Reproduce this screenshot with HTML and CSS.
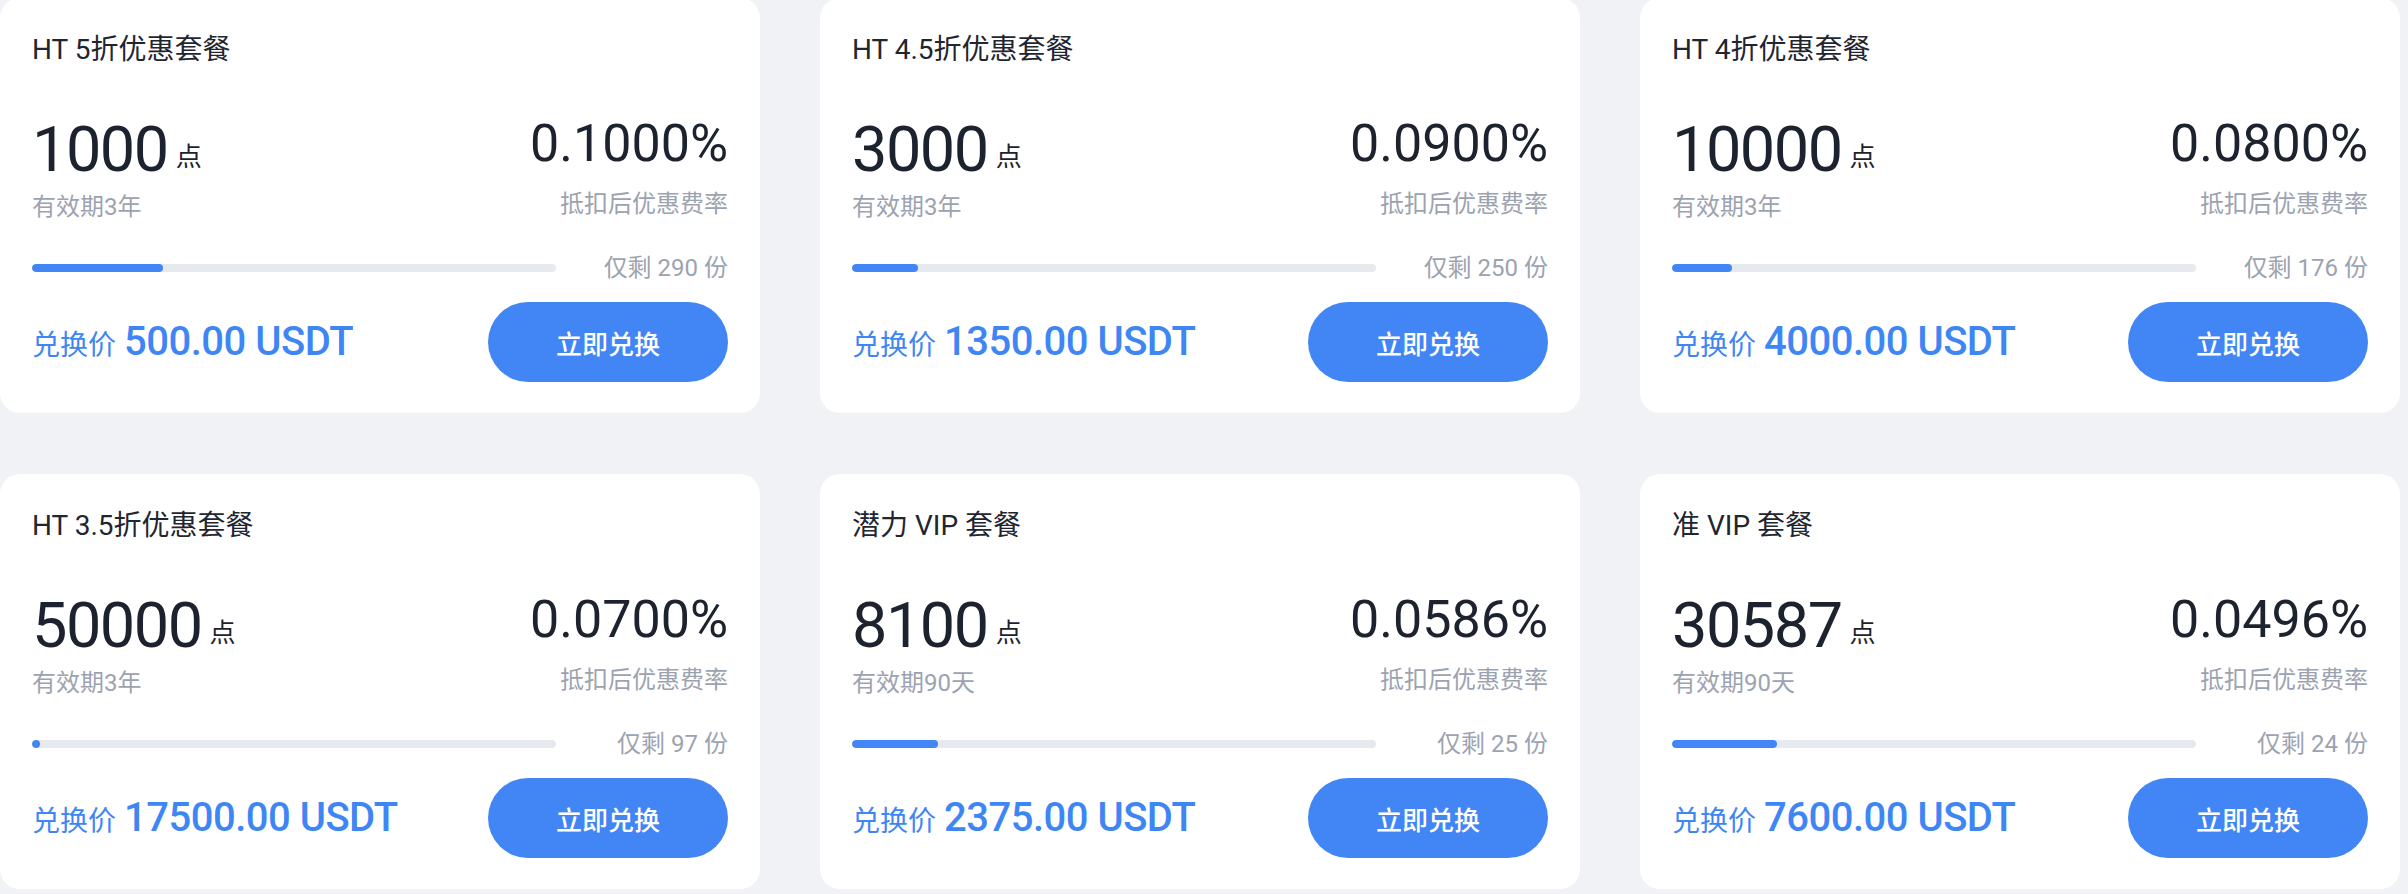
FILE: index.html
```html
<!DOCTYPE html>
<html lang="zh-CN">
<head>
<meta charset="utf-8">
<title>套餐兑换</title>
<link rel="stylesheet" href="styles.css">
</head>
<body>
<main class="grid">
  <section class="card">
    <div class="title">HT 5折优惠套餐</div>
    <div class="stats">
      <div class="col">
        <div class="amount"><span class="num">1000</span><span class="unit">点</span></div>
        <div class="label">有效期3年</div>
      </div>
      <div class="col right">
        <div class="rate">0.1000%</div>
        <div class="label label-r">抵扣后优惠费率</div>
      </div>
    </div>
    <div class="progress">
      <div class="track"><div class="fill" style="width:25%"></div></div>
      <span class="left">仅剩 290 份</span>
    </div>
    <div class="foot">
      <div class="price"><span class="plabel">兑换价</span><span class="pval">500.00 USDT</span></div>
      <button class="btn">立即兑换</button>
    </div>
  </section>

  <section class="card">
    <div class="title">HT 4.5折优惠套餐</div>
    <div class="stats">
      <div class="col">
        <div class="amount"><span class="num">3000</span><span class="unit">点</span></div>
        <div class="label">有效期3年</div>
      </div>
      <div class="col right">
        <div class="rate">0.0900%</div>
        <div class="label label-r">抵扣后优惠费率</div>
      </div>
    </div>
    <div class="progress">
      <div class="track"><div class="fill" style="width:12.6%"></div></div>
      <span class="left">仅剩 250 份</span>
    </div>
    <div class="foot">
      <div class="price"><span class="plabel">兑换价</span><span class="pval">1350.00 USDT</span></div>
      <button class="btn">立即兑换</button>
    </div>
  </section>

  <section class="card">
    <div class="title">HT 4折优惠套餐</div>
    <div class="stats">
      <div class="col">
        <div class="amount"><span class="num">10000</span><span class="unit">点</span></div>
        <div class="label">有效期3年</div>
      </div>
      <div class="col right">
        <div class="rate">0.0800%</div>
        <div class="label label-r">抵扣后优惠费率</div>
      </div>
    </div>
    <div class="progress">
      <div class="track"><div class="fill" style="width:11.5%"></div></div>
      <span class="left">仅剩 176 份</span>
    </div>
    <div class="foot">
      <div class="price"><span class="plabel">兑换价</span><span class="pval">4000.00 USDT</span></div>
      <button class="btn">立即兑换</button>
    </div>
  </section>

  <section class="card">
    <div class="title">HT 3.5折优惠套餐</div>
    <div class="stats">
      <div class="col">
        <div class="amount"><span class="num">50000</span><span class="unit">点</span></div>
        <div class="label">有效期3年</div>
      </div>
      <div class="col right">
        <div class="rate">0.0700%</div>
        <div class="label label-r">抵扣后优惠费率</div>
      </div>
    </div>
    <div class="progress">
      <div class="track"><div class="fill" style="width:1.6%"></div></div>
      <span class="left">仅剩 97 份</span>
    </div>
    <div class="foot">
      <div class="price"><span class="plabel">兑换价</span><span class="pval">17500.00 USDT</span></div>
      <button class="btn">立即兑换</button>
    </div>
  </section>

  <section class="card">
    <div class="title">潜力 VIP 套餐</div>
    <div class="stats">
      <div class="col">
        <div class="amount"><span class="num">8100</span><span class="unit">点</span></div>
        <div class="label">有效期90天</div>
      </div>
      <div class="col right">
        <div class="rate">0.0586%</div>
        <div class="label label-r">抵扣后优惠费率</div>
      </div>
    </div>
    <div class="progress">
      <div class="track"><div class="fill" style="width:16.4%"></div></div>
      <span class="left">仅剩 25 份</span>
    </div>
    <div class="foot">
      <div class="price"><span class="plabel">兑换价</span><span class="pval">2375.00 USDT</span></div>
      <button class="btn">立即兑换</button>
    </div>
  </section>

  <section class="card">
    <div class="title">准 VIP 套餐</div>
    <div class="stats">
      <div class="col">
        <div class="amount"><span class="num">30587</span><span class="unit">点</span></div>
        <div class="label">有效期90天</div>
      </div>
      <div class="col right">
        <div class="rate">0.0496%</div>
        <div class="label label-r">抵扣后优惠费率</div>
      </div>
    </div>
    <div class="progress">
      <div class="track"><div class="fill" style="width:20%"></div></div>
      <span class="left">仅剩 24 份</span>
    </div>
    <div class="foot">
      <div class="price"><span class="plabel">兑换价</span><span class="pval">7600.00 USDT</span></div>
      <button class="btn">立即兑换</button>
    </div>
  </section>
</main>
</body>
</html>
```

FILE: styles.css
```css
* { box-sizing: border-box; }

html, body {
  margin: 0;
  padding: 0;
  background: #f1f2f6;
}

body {
  font-family: Roboto, "Noto Sans CJK SC", "Noto Sans", sans-serif;
  color: #1e2430;
}

.grid {
  display: grid;
  grid-template-columns: repeat(3, 760px);
  column-gap: 60px;
  row-gap: 61px;
  margin-top: -2px;
}

.card {
  height: 415px;
  background: #ffffff;
  border-radius: 20px;
  padding: 32px 32px 0;
  display: flex;
  flex-direction: column;
}

.title {
  font-size: 28px;
  line-height: 40px;
  font-weight: 400;
  color: #1f2630;
}

.stats {
  margin-top: 48px;
  display: flex;
  justify-content: space-between;
  align-items: flex-start;
}

.col {
  display: flex;
  flex-direction: column;
}

.col.right {
  align-items: flex-end;
}

.amount {
  line-height: 64px;
  height: 64px;
  white-space: nowrap;
}

.num {
  font-size: 63px;
  line-height: 64px;
  letter-spacing: -1.5px;
  color: #1c232e;
}

.unit {
  font-size: 26px;
  line-height: 26px;
  margin-left: 8px;
  vertical-align: 5px;
  color: #1c232e;
}

.rate {
  font-size: 52px;
  line-height: 52px;
  color: #1c232e;
}

.label {
  margin-top: 9px;
  font-size: 24px;
  line-height: 32px;
  color: #9ca3b0;
}

.label-r {
  margin-top: 18px;
}

.progress {
  margin-top: 29px;
  height: 32px;
  display: flex;
  align-items: center;
}

.track {
  flex: 0 0 524px;
  height: 8px;
  border-radius: 4px;
  background: #e6e9ed;
  overflow: hidden;
}

.fill {
  height: 100%;
  border-radius: 4px;
  background: #4285f4;
}

.left {
  margin-left: auto;
  font-size: 24px;
  line-height: 32px;
  color: #9ca3b0;
}

.foot {
  margin-top: 18px;
  display: flex;
  align-items: center;
  justify-content: space-between;
}

.price {
  padding-top: 4px;
  color: #3f86f5;
  white-space: nowrap;
  display: flex;
  align-items: baseline;
}

.plabel {
  font-size: 28px;
  line-height: 40px;
}

.pval {
  margin-left: 8px;
  font-size: 40px;
  line-height: 40px;
  letter-spacing: -0.5px;
  font-weight: 500;
}

.btn {
  width: 240px;
  height: 80px;
  border: 0;
  border-radius: 40px;
  background: #4285f4;
  color: #ffffff;
  font-family: Roboto, "Noto Sans CJK SC", sans-serif;
  font-size: 26px;
  font-weight: 500;
  padding: 0;
  cursor: pointer;
}
```
